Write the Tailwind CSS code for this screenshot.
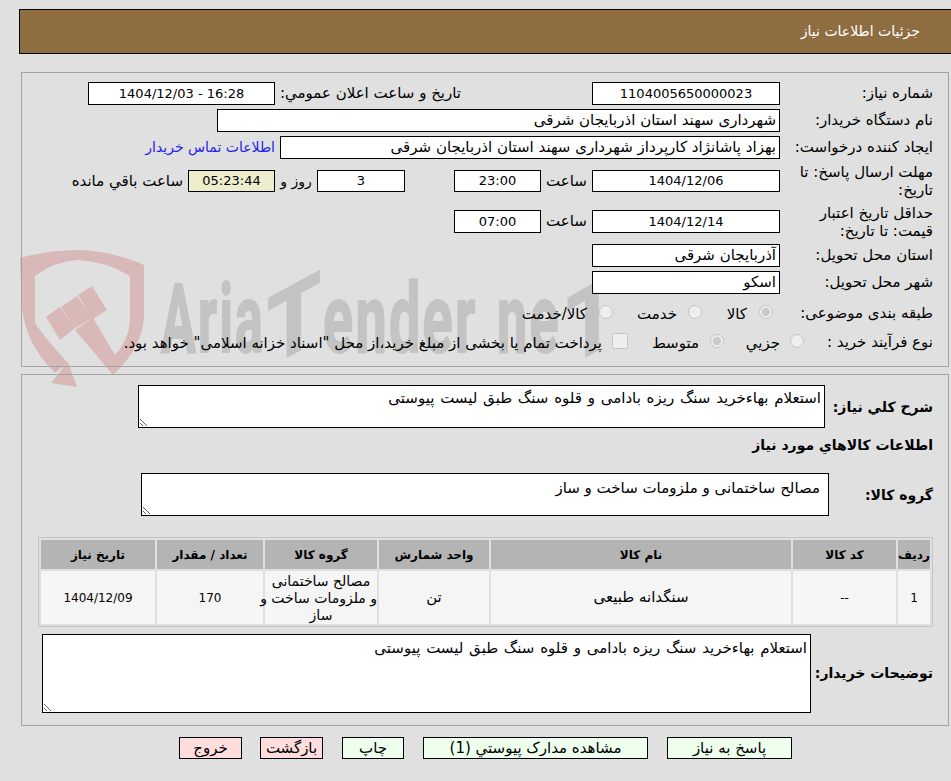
<!doctype html>
<html lang="fa" dir="rtl">
<head>
<meta charset="utf-8">
<script src="https://cdn.jsdelivr.net/npm/@tailwindcss/browser@4"></script>
</head>
<body class="bg-[#e0e0e0] text-black font-['DejaVu_Sans',sans-serif] text-[15px] overflow-hidden">
<div class="relative w-[951px] h-[781px] pt-[9px]">
  <div class="absolute left-[20px] top-[248px] w-[610px] h-[142px] z-0 font-['Roboto',sans-serif] font-bold text-[#c3c3c3] text-[96px] leading-[96px] tracking-[4px] [-webkit-text-stroke:2px_#c3c3c3]" dir="ltr">
    <svg class="absolute left-0 top-0" width="135" height="142" viewBox="0 0 135 142">
      <path fill="#d9b8b8" d="M0 10 Q28 2 58 2 Q92 3 124 17 V69 Q122 100 93 127 L95 107 Q110 90 110 70 V28 Q85 13 58 12 Q35 13 15 28 V75 Q25 90 48 115 L35 125 Q5 95 2 59 Z"/>
      <path fill="#d9b8b8" d="M48 114 L57 139 L31 135 Z"/>
      <path fill="#d9b8b8" d="M26 69 L40 59 L55 80 L40 92 Z M41 59 L57 48 L73 70 L55 80 Z M58 47 L72 38 L87 62 L73 71 Z M55 82 L73 70 L95 107 L93 127 Z"/>
    </svg>
    <span class="absolute left-[141px] top-[23px] origin-left scale-x-[0.54] whitespace-nowrap">Aria</span>
    <span class="absolute left-[244px] top-[23px] scale-x-[0.9] -skew-y-[26deg] whitespace-nowrap">T</span>
    <span class="absolute left-[303px] top-[23px] origin-left scale-x-[0.58] whitespace-nowrap">ender</span>
    <span class="absolute left-[477px] top-[23px] origin-left scale-x-[0.56] whitespace-nowrap">ne</span>
    <span class="absolute left-[542px] top-[23px] scale-x-[0.85] -skew-y-[26deg] whitespace-nowrap">T</span>
  </div>

  <div class="relative h-[45px] w-[932px] border border-black border-r-0 bg-[#8e6d41] flex items-center text-white text-[14px] pr-[31px]">جزئیات اطلاعات نیاز</div>

  <section class="relative z-10 mt-[18px] mr-[2px] w-[928px] h-[295px] border border-[#a3a3a3] pt-[9px] pr-[15px]">
    <div class="flex h-[23px] items-center">
      <div class="w-[153px] shrink-0">شماره نیاز:</div>
      <div class="w-[188px] h-[23px] border border-black bg-white flex items-center justify-center text-[13px]">1104005650000023</div>
      <div class="w-[131px] shrink-0"></div>
      <div class="w-[186px] shrink-0 whitespace-nowrap">تاریخ و ساعت اعلان عمومي:</div>
      <div class="w-[187px] h-[23px] border border-black bg-white flex items-center justify-center text-[13px]">16:28 - 1404/12/03</div>
    </div>
    <div class="flex h-[23px] mt-[4px] items-center">
      <div class="w-[153px] shrink-0">نام دستگاه خریدار:</div>
      <div class="w-[563px] h-[23px] border border-black bg-white flex items-center pr-[3px]">شهرداری سهند استان اذربایجان شرقی</div>
    </div>
    <div class="flex h-[23px] mt-[4px] items-center">
      <div class="w-[153px] shrink-0 whitespace-nowrap">ایجاد کننده درخواست:</div>
      <div class="w-[500px] h-[23px] border border-black bg-white flex items-center pr-[3px]">بهزاد پاشانژاد کارپرداز شهرداری سهند استان اذربایجان شرقی</div>
      <a class="mr-[5px] text-[#2222ee] text-[14px]">اطلاعات تماس خریدار</a>
    </div>
    <div class="flex h-[22px] mt-[11px] items-center">
      <div class="w-[153px] shrink-0 leading-[18px]">مهلت ارسال پاسخ: تا تاریخ:</div>
      <div class="w-[188px] h-[22px] border border-black bg-white flex items-center justify-center text-[13px]">1404/12/06</div>
      <div class="w-[51px] text-center shrink-0">ساعت</div>
      <div class="w-[87px] h-[22px] border border-black bg-white flex items-center justify-center text-[13px]">23:00</div>
      <div class="w-[49px] shrink-0"></div>
      <div class="w-[88px] h-[22px] border border-black bg-white flex items-center justify-center text-[13px]">3</div>
      <div class="w-[42px] text-center shrink-0 text-[14px]">روز و</div>
      <div class="w-[87px] h-[22px] border border-black bg-[#eeeecc] flex items-center justify-center text-[13px]">05:23:44</div>
      <div class="mr-[5px]">ساعت باقي مانده</div>
    </div>
    <div class="flex h-[23px] mt-[18px] items-center">
      <div class="w-[153px] shrink-0 leading-[18px]">حداقل تاریخ اعتبار قیمت: تا تاریخ:</div>
      <div class="w-[188px] h-[23px] border border-black bg-white flex items-center justify-center text-[13px]">1404/12/14</div>
      <div class="w-[51px] text-center shrink-0">ساعت</div>
      <div class="w-[87px] h-[23px] border border-black bg-white flex items-center justify-center text-[13px]">07:00</div>
    </div>
    <div class="flex h-[23px] mt-[11px] items-center">
      <div class="w-[153px] shrink-0">استان محل تحویل:</div>
      <div class="w-[188px] h-[23px] border border-black bg-white flex items-center pr-[3px]">آذربایجان شرقی</div>
    </div>
    <div class="flex h-[23px] mt-[4px] items-center">
      <div class="w-[153px] shrink-0">شهر محل تحویل:</div>
      <div class="w-[188px] h-[23px] border border-black bg-white flex items-center pr-[3px]">اسکو</div>
    </div>
    <div class="flex h-[20px] mt-[8px] items-center whitespace-nowrap">
      <div class="w-[153px] shrink-0 pt-[3px]">طبقه بندی موضوعی:</div>
      <label class="flex items-center w-[71px] gap-[12px] mr-[7px]"><input type="radio" disabled checked class="m-0 size-[14px] shrink-0"><span class="pt-[5px]">کالا</span></label>
      <label class="flex items-center w-[89px] gap-[11px]"><input type="radio" disabled class="m-0 size-[14px] shrink-0"><span class="pt-[5px]">خدمت</span></label>
      <label class="flex items-center gap-[12px]"><input type="radio" disabled class="m-0 size-[14px] shrink-0"><span class="pt-[5px]">کالا/خدمت</span></label>
    </div>
    <div class="flex h-[20px] mt-[9px] items-center whitespace-nowrap">
      <div class="w-[129px] shrink-0 pt-[3px]">نوع فرآیند خرید :</div>
      <label class="flex items-center w-[80px] gap-[10px]"><input type="radio" disabled class="m-0 size-[14px] shrink-0"><span class="pt-[5px]">جزیي</span></label>
      <label class="flex items-center w-[96px] gap-[11px]"><input type="radio" disabled checked class="m-0 size-[14px] shrink-0"><span class="pt-[5px]">متوسط</span></label>
      <label class="flex items-center gap-[10px]"><input type="checkbox" disabled class="m-0 size-[16px] shrink-0"><span class="pt-[5px]">پرداخت تمام یا بخشی از مبلغ خرید،از محل "اسناد خزانه اسلامی" خواهد بود.</span></label>
    </div>
  </section>

  <section class="relative z-10 mt-[7px] mr-[2px] w-[928px] h-[352px] border border-[#a3a3a3] pr-[15px] pt-[10px]">
    <div class="flex items-start h-[43px]">
      <div class="w-[108px] shrink-0 font-bold text-[14px] pt-[12px]">شرح کلي نیاز:</div>
      <textarea readonly class="block w-[687px] h-[43px] border border-black bg-white px-[3px] py-[3px] leading-[18px] [word-spacing:1px]">استعلام بهاءخرید سنگ ریزه بادامی و قلوه سنگ طبق لیست پیوستی</textarea>
    </div>
    <div class="font-bold text-[14px] mt-[7px] h-[20px]">اطلاعات کالاهاي مورد نیاز</div>
    <div class="flex items-start h-[43px] mt-[18px]">
      <div class="w-[104px] shrink-0 font-bold text-[14px] pt-[12px]">گروه کالا:</div>
      <textarea readonly class="block w-[688px] h-[43px] border border-black bg-white px-[8px] py-[5px] leading-[18px]">مصالح ساختمانی و ملزومات ساخت و ساز</textarea>
    </div>
    <div class="mt-[21px] w-[895px] border border-[#c4c4c4]">
      <table class="w-full table-fixed border-separate border-spacing-[2px] text-center">
        <colgroup><col class="w-[32px]"><col class="w-[103px]"><col class="w-[300px]"><col class="w-[110px]"><col class="w-[112px]"><col class="w-[106px]"><col class="w-[114px]"></colgroup>
        <thead><tr class="h-[29px] bg-[#b4b4b4] text-[12px]">
          <th class="font-bold p-0">ردیف</th><th class="font-bold p-0">کد کالا</th><th class="font-bold p-0">نام کالا</th><th class="font-bold p-0">واحد شمارش</th><th class="font-bold p-0">گروه کالا</th><th class="font-bold p-0">تعداد / مقدار</th><th class="font-bold p-0">تاریخ نیاز</th>
        </tr></thead>
        <tbody><tr class="h-[53px] bg-[#f5f5f5]">
          <td class="p-0 text-[12px]">1</td><td class="p-0 text-[12px]">--</td><td class="p-0">سنگدانه طبیعی</td><td class="p-0">تن</td><td class="p-0 pt-[1px] leading-[17px] text-[14px] whitespace-nowrap">مصالح ساختمانی<br>و ملزومات ساخت و<br>ساز</td><td class="p-0 text-[12px]">170</td><td class="p-0 text-[12px]">1404/12/09</td>
        </tr></tbody>
      </table>
    </div>
    <div class="flex items-center h-[79px] mt-[7px]">
      <div class="w-[122px] shrink-0 font-bold text-[14px]">توضیحات خریدار:</div>
      <textarea readonly class="block w-[769px] h-[79px] border border-black bg-white px-[3px] py-[4px] leading-[18px] [word-spacing:1px]">استعلام بهاءخرید سنگ ریزه بادامی و قلوه سنگ طبق لیست پیوستی</textarea>
    </div>
  </section>

  <div class="relative z-10 flex mt-[11px] mr-[159px]">
    <button class="w-[125px] h-[22px] pt-[1px] border border-black bg-[#eeffee] flex items-center justify-center">پاسخ به نیاز</button>
    <button class="w-[225px] h-[22px] pt-[1px] mr-[19px] border border-black bg-[#eeffee] flex items-center justify-center">مشاهده مدارک پیوستي (1)</button>
    <button class="w-[62px] h-[22px] pt-[1px] mr-[19px] border border-black bg-[#eeffee] flex items-center justify-center">چاپ</button>
    <button class="w-[63px] h-[22px] pt-[1px] mr-[19px] border border-black bg-[#ffdddd] flex items-center justify-center">بازگشت</button>
    <button class="w-[63px] h-[22px] pt-[1px] mr-[18px] border border-black bg-[#ffdddd] flex items-center justify-center">خروج</button>
  </div>
</div>
</body>
</html>
